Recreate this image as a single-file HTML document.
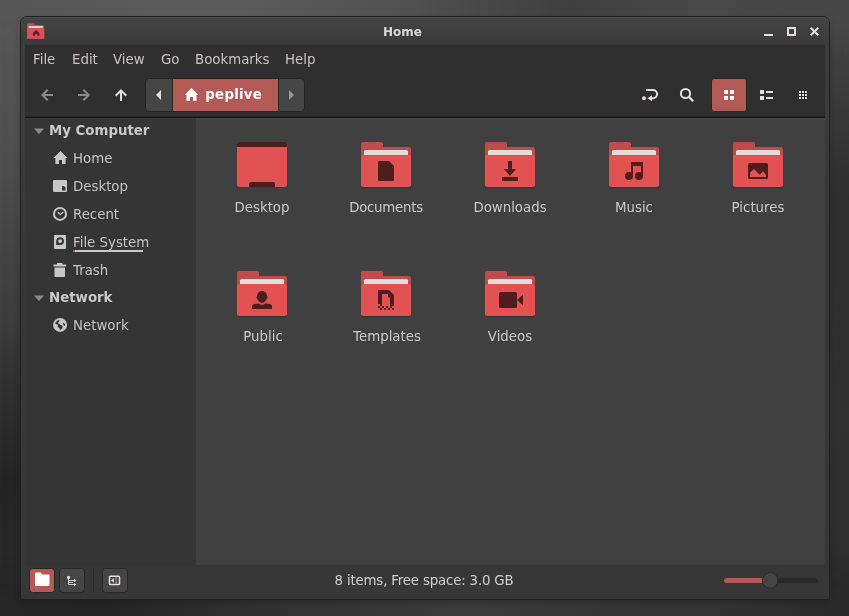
<!DOCTYPE html>
<html lang="en">
<head>
<meta charset="utf-8">
<title>Home</title>
<style>
*{box-sizing:border-box;margin:0;padding:0}
html,body{width:849px;height:616px;overflow:hidden}
body{
  position:relative;
  font-family:"DejaVu Sans","Liberation Sans",sans-serif;
  font-size:13.33px;
  color:#d8d8d8;
  background:#2e2e2e;
}

#bgL,#bgR{position:absolute;left:0;top:0;width:849px;height:616px}
#bgL{background:linear-gradient(to bottom,#565656 0px,#545454 60px,#505050 150px,#454545 240px,#3d3d3d 320px,#2e2e2e 400px,#242424 480px,#282828 560px,#262626 616px)}
#bgR{background:linear-gradient(to bottom,#474747 0px,#414141 46px,#383838 120px,#2f2f2f 200px,#2f2f2f 300px,#323232 420px,#2f2f2f 530px,#292929 616px);-webkit-mask-image:linear-gradient(to right,transparent 0,#000 100%);mask-image:linear-gradient(to right,transparent 0,#000 100%)}
#bgT{position:absolute;left:0;top:0;width:849px;height:60px;background:linear-gradient(to right,#565656 0px,#575757 66px,#5a5a5a 136px,#5c5c5c 221px,#575757 306px,#515151 406px,#484848 486px,#3f3f3f 572px,#444444 636px,#494949 706px,#454545 776px,#474747 849px);-webkit-mask-image:linear-gradient(to bottom,#000 0,#000 16px,transparent 60px);mask-image:linear-gradient(to bottom,#000 0,#000 16px,transparent 60px)}
#bgB{position:absolute;left:0;top:556px;width:849px;height:60px;background:linear-gradient(to right,#262626 0px,#252525 106px,#2e2e2e 226px,#363636 346px,#3c3c3c 466px,#373737 586px,#333333 706px,#2e2e2e 786px,#292929 849px);-webkit-mask-image:linear-gradient(to top,#000 0,#000 16px,transparent 60px);mask-image:linear-gradient(to top,#000 0,#000 16px,transparent 60px)}
.abs{position:absolute}
#win{
  will-change:transform;
  position:absolute;left:20px;top:16px;width:810px;height:584px;
  background:linear-gradient(180deg,#3d3d3d 0,#3c3c3c 100px,#373737 220px,#373737 100%);border:1px solid #212121;border-radius:7px 7px 3px 3px;
  box-shadow:0 3px 6px rgba(0,0,0,.16);
}
#titlebar{position:absolute;left:0;top:0;width:808px;height:28px;border-radius:6px 6px 0 0;
  background:linear-gradient(180deg,#444444 0%,#3a3a3a 100%);box-shadow:inset 0 1px 0 rgba(255,255,255,.035);}
#title{position:absolute;left:27px;top:0;width:709px;height:28px;line-height:30px;text-align:center;font-weight:bold;font-size:12px;color:#d8d8d8}
#client{position:absolute;left:4px;top:28px;width:800px;height:550px;background:#2f2f2f;overflow:hidden}
#menubar{position:absolute;left:0;top:0;width:800px;height:28px}
#menubar span{position:absolute;top:1px;height:28px;line-height:28px;color:#cbc3c3}
#toolbar{position:absolute;left:0;top:28px;width:800px;height:44px}
#sep{position:absolute;z-index:2;left:0;top:72px;width:800px;height:1px;background:#101010;box-shadow:0 1px 0 rgba(255,255,255,.035), 0 -1px 0 rgba(0,0,0,.12)}
#sidebar{position:absolute;z-index:0;left:0;top:73px;width:171px;height:447px;background:#353535}
#main{position:absolute;left:171px;top:73px;width:629px;height:447px;background:#404040}
#status{position:absolute;left:0;top:520px;width:800px;height:30px;background:#373737;border-top:1px solid #353535}
.sh{position:absolute;left:24px;height:28px;line-height:28px;font-weight:bold;color:#c9c9c9}
.si{position:absolute;left:48px;height:28px;line-height:28px;color:#c4c4c4}
.lbl{position:absolute;width:120px;text-align:center;height:20px;line-height:20px;color:#c9c9c9}
.btn{position:absolute;width:25px;height:25px;border:1px solid #282828;border-radius:4px;background:#454545}
.btn.on{background:#b55a58;border-color:#2a2222}
</style>
</head>
<body>
<div id="bgL"></div><div id="bgR"></div><div id="bgT"></div><div id="bgB"></div>
<div id="win">
  <div id="titlebar"></div>
  <div id="title">Home</div>
  <div id="client">
    <div id="menubar">
      <span style="left:8px">File</span>
      <span style="left:47px">Edit</span>
      <span style="left:88px">View</span>
      <span style="left:136px">Go</span>
      <span style="left:170px">Bookmarks</span>
      <span style="left:260px">Help</span>
    </div>
    <div id="toolbar"></div>
    <div id="sep"></div>
    <div id="sidebar">
      <div class="sh" style="top:-1px">My Computer</div>
      <div class="si" style="top:27px">Home</div>
      <div class="si" style="top:55px">Desktop</div>
      <div class="si" style="top:83px">Recent</div>
      <div class="si" style="top:111px">File System</div>
      <div class="si" style="top:139px">Trash</div>
      <div class="sh" style="top:166px">Network</div>
      <div class="si" style="top:194px">Network</div>
    </div>
    <div id="main">
      <div class="lbl" style="left:6px;top:80px">Desktop</div>
      <div class="lbl" style="left:130px;top:80px;letter-spacing:-0.250px">Documents</div>
      <div class="lbl" style="left:254px;top:80px">Downloads</div>
      <div class="lbl" style="left:378px;top:80px">Music</div>
      <div class="lbl" style="left:502px;top:80px">Pictures</div>
      <div class="lbl" style="left:7px;top:209px">Public</div>
      <div class="lbl" style="left:131px;top:209px">Templates</div>
      <div class="lbl" style="left:254px;top:209px">Videos</div>
    </div>
    <div id="status">
      <div class="abs" style="left:-1px;top:0;width:800px;height:29px;line-height:30px;text-align:center;letter-spacing:-0.170px;color:#d0d0d0">8 items, Free space: 3.0 GB</div>
    </div>
  </div>
</div>
<svg class="abs" style="left:0;top:0;will-change:transform" width="849" height="616" viewBox="0 0 849 616"><g transform="translate(230,133)"><rect x="7" y="9" width="50" height="45.600" rx="2" fill="#2c2c2c" opacity=".55"/><rect x="7" y="9" width="50" height="45" rx="2" fill="#e25252"/><path d="M7,14 v-3 a2,2 0 0 1 2,-2 h46 a2,2 0 0 1 2,2 v3 z" fill="#4f1d1d"/><path d="M19,54 v-3 a2,2 0 0 1 2,-2 h22 a2,2 0 0 1 2,2 v3 z" fill="#4f1d1d"/></g><g transform="translate(354,133)"><path d="M7,53 V11 a2,2 0 0 1 2,-2 h18 a2,2 0 0 1 2,2 v3 h26 a2,2 0 0 1 2,2 v37 z" fill="#c14b4b"/><rect x="7" y="23" width="50" height="32.6" rx="2" fill="#2c2c2c" opacity=".55"/><path d="M10,30 V18.5 a1.5,1.5 0 0 1 1.5,-1.500 h41 a1.500,1.500 0 0 1 1.500,1.500 V30 z" fill="#dedede"/><rect x="7" y="22" width="50" height="32" rx="2" fill="#e25252"/><path d="M24,28 h11 l5,5 v14 a1,1 0 0 1 -1,1 h-14 a1,1 0 0 1 -1,-1 v-18 a1,1 0 0 1 1,-1 z" transform="translate(0,0)" fill="#4f1d1d"/></g><g transform="translate(478,133)"><path d="M7,53 V11 a2,2 0 0 1 2,-2 h18 a2,2 0 0 1 2,2 v3 h26 a2,2 0 0 1 2,2 v37 z" fill="#c14b4b"/><rect x="7" y="23" width="50" height="32.6" rx="2" fill="#2c2c2c" opacity=".55"/><path d="M10,30 V18.5 a1.5,1.5 0 0 1 1.5,-1.500 h41 a1.500,1.500 0 0 1 1.500,1.500 V30 z" fill="#dedede"/><rect x="7" y="22" width="50" height="32" rx="2" fill="#e25252"/><path d="M30,28 h4 v8 h4 l-6,7 l-6,-7 h4 z M24,44 h16 v4 h-16 z" fill="#4f1d1d"/></g><g transform="translate(602,133)"><path d="M7,53 V11 a2,2 0 0 1 2,-2 h18 a2,2 0 0 1 2,2 v3 h26 a2,2 0 0 1 2,2 v37 z" fill="#c14b4b"/><rect x="7" y="23" width="50" height="32.6" rx="2" fill="#2c2c2c" opacity=".55"/><path d="M10,30 V18.5 a1.5,1.5 0 0 1 1.5,-1.500 h41 a1.500,1.500 0 0 1 1.500,1.500 V30 z" fill="#dedede"/><rect x="7" y="22" width="50" height="32" rx="2" fill="#e25252"/><path d="M29,29 h12 v14 h-2 v-10 h-8 v10 h-2 z" fill="#4f1d1d"/><circle cx="27" cy="43" r="4" fill="#4f1d1d"/><circle cx="37" cy="43" r="4" fill="#4f1d1d"/></g><g transform="translate(726,133)"><path d="M7,53 V11 a2,2 0 0 1 2,-2 h18 a2,2 0 0 1 2,2 v3 h26 a2,2 0 0 1 2,2 v37 z" fill="#c14b4b"/><rect x="7" y="23" width="50" height="32.6" rx="2" fill="#2c2c2c" opacity=".55"/><path d="M10,30 V18.5 a1.5,1.5 0 0 1 1.5,-1.500 h41 a1.500,1.500 0 0 1 1.500,1.500 V30 z" fill="#dedede"/><rect x="7" y="22" width="50" height="32" rx="2" fill="#e25252"/><path d="M23.500,30 h17 a1.500,1.500 0 0 1 1.500,1.500 v13 a1.500,1.500 0 0 1 -1.500,1.500 h-17 a1.500,1.500 0 0 1 -1.500,-1.500 v-13 a1.500,1.500 0 0 1 1.500,-1.500 z M24,44 h16 v-2 l-2.900,-3.700 l-3.400,3.500 l-5.600,-5.900 l-4.100,3.900 z" fill-rule="evenodd" fill="#4f1d1d"/></g><g transform="translate(230,262)"><path d="M7,53 V11 a2,2 0 0 1 2,-2 h18 a2,2 0 0 1 2,2 v3 h26 a2,2 0 0 1 2,2 v37 z" fill="#c14b4b"/><rect x="7" y="23" width="50" height="32.6" rx="2" fill="#2c2c2c" opacity=".55"/><path d="M10,30 V18.5 a1.5,1.5 0 0 1 1.5,-1.500 h41 a1.500,1.500 0 0 1 1.500,1.500 V30 z" fill="#dedede"/><rect x="7" y="22" width="50" height="32" rx="2" fill="#e25252"/><path d="M27,34 a5,5 0 0 1 10,0 c0,1 0,2.500 -0.700,3.800 c-1,2 -2.800,3.100 -4.300,3.100 c-1.500,0 -3.300,-1.100 -4.300,-3.100 c-0.700,-1.300 -0.700,-2.800 -0.700,-3.800 z" fill="#4f1d1d"/><ellipse cx="32" cy="35.200" rx="6" ry="1.500" fill="#4f1d1d"/><path d="M22,47 v-3.200 c0,-1.300 3,-2.100 6.500,-2.300 q3.500,2.600 7,0 c3.500,0.200 6.500,1 6.500,2.300 v3.200 z" fill="#4f1d1d"/></g><g transform="translate(354,262)"><path d="M7,53 V11 a2,2 0 0 1 2,-2 h18 a2,2 0 0 1 2,2 v3 h26 a2,2 0 0 1 2,2 v37 z" fill="#c14b4b"/><rect x="7" y="23" width="50" height="32.6" rx="2" fill="#2c2c2c" opacity=".55"/><path d="M10,30 V18.5 a1.5,1.5 0 0 1 1.5,-1.500 h41 a1.500,1.500 0 0 1 1.500,1.500 V30 z" fill="#dedede"/><rect x="7" y="22" width="50" height="32" rx="2" fill="#e25252"/><path d="M24,28 h11 l5,5 v11 h-4 v-8.500 h-2 v-3.500 h-6 v12 h-2 v-2 h-2 z" fill="#4f1d1d"/><rect x="24" y="44" width="2" height="2" fill="#4f1d1d"/><rect x="28" y="44" width="2" height="2" fill="#4f1d1d"/><rect x="32" y="44" width="2" height="2" fill="#4f1d1d"/><rect x="36" y="44" width="2" height="2" fill="#4f1d1d"/><rect x="26" y="46" width="2" height="2" fill="#4f1d1d"/><rect x="30" y="46" width="2" height="2" fill="#4f1d1d"/><rect x="34" y="46" width="2" height="2" fill="#4f1d1d"/><rect x="38" y="46" width="2" height="2" fill="#4f1d1d"/></g><g transform="translate(478,262)"><path d="M7,53 V11 a2,2 0 0 1 2,-2 h18 a2,2 0 0 1 2,2 v3 h26 a2,2 0 0 1 2,2 v37 z" fill="#c14b4b"/><rect x="7" y="23" width="50" height="32.6" rx="2" fill="#2c2c2c" opacity=".55"/><path d="M10,30 V18.5 a1.5,1.5 0 0 1 1.5,-1.500 h41 a1.500,1.500 0 0 1 1.500,1.500 V30 z" fill="#dedede"/><rect x="7" y="22" width="50" height="32" rx="2" fill="#e25252"/><rect x="21" y="30" width="18" height="16" rx="1.500" fill="#4f1d1d"/><path d="M39.300,38 l5.700,-5.800 v11.600 z" fill="#4f1d1d"/></g><g transform="translate(27,23)"><path d="M0,15.800 V1.300 a1,1 0 0 1 1,-1 h5.500 a1,1 0 0 1 1,1 v0.700 h8.700 a1,1 0 0 1 1,1 V15.800 z" fill="#c14b4b"/><rect x="1.500" y="3" width="14.200" height="2.500" fill="#dcd2d2"/><rect x="0" y="5" width="17.200" height="10.800" rx="1" fill="#d65355"/><path d="M9.100,6.900 l3.300,3.100 v2.800 h-2.300 v-1.900 h-2 v1.900 h-2.300 v-2.800 z" fill="#5e2023"/></g><rect x="764" y="34" width="9" height="2" fill="#e4dede"/><rect x="788" y="28" width="7" height="7" fill="none" stroke="#e4dede" stroke-width="2"/><path d="M810.700,27.700 l7.600,7.600 M818.300,27.700 l-7.600,7.600" stroke="#e4dede" stroke-width="2" fill="none"/><path d="M53,95 H43 M47.700,89.700 L42.400,95 L47.700,100.300" stroke="#8c8888" stroke-width="2" fill="none"/><path d="M78,95 H88 M83.300,89.700 L88.600,95 L83.300,100.300" stroke="#8c8888" stroke-width="2" fill="none"/><path d="M121,101 V91 M115.700,95.700 L121,90.400 L126.300,95.700" stroke="#e4dede" stroke-width="2" fill="none"/><rect x="145.500" y="78.500" width="159" height="33" rx="3.500" fill="#454545" stroke="#242424"/><rect x="173" y="79" width="105" height="32" fill="#b35a56"/><path d="M172.500,79 v32 M278.500,79 v32" stroke="#2e2626" stroke-width="1"/><text x="205.300" y="99.200" letter-spacing="0.250" font-family="DejaVu Sans, Liberation Sans, sans-serif" font-weight="bold" font-size="13.330" fill="#ffffff">peplive</text><path d="M156,95 l5,-5 v10 z" fill="#e4dede"/><path d="M294,95 l-5,-5 v10 z" fill="#9a9696"/><path d="M191.500,88 l6.800,6.800 h-1.800 v6.200 h-3.500 v-4 h-3 v4 h-3.500 v-6.200 h-1.800 z" fill="#ffffff"/><circle cx="644" cy="98.200" r="2" fill="#e4dede"/><path d="M646,90 H653 a4.100,4.100 0 0 1 0,8.200 H651" stroke="#e4dede" stroke-width="2" fill="none"/><path d="M647.500,98.200 l4.500,-3 v6 z" fill="#e4dede"/><circle cx="685.500" cy="93.500" r="4.600" stroke="#e4dede" stroke-width="2" fill="none"/><path d="M688.800,96.800 L693.200,101.200" stroke="#e4dede" stroke-width="2.300" fill="none"/><rect x="711.500" y="78.500" width="35" height="33" rx="2.500" fill="#b35a56" stroke="#252828"/><rect x="724" y="90" width="4" height="4" fill="#ffffff"/><rect x="724" y="96" width="4" height="4" fill="#ffffff"/><rect x="730" y="90" width="4" height="4" fill="#ffffff"/><rect x="730" y="96" width="4" height="4" fill="#ffffff"/><rect x="760" y="90" width="4" height="4" fill="#e4dede"/><rect x="766" y="91" width="7" height="2" fill="#e4dede"/><rect x="760" y="96" width="4" height="4" fill="#e4dede"/><rect x="766" y="97" width="7" height="2" fill="#e4dede"/><rect x="799" y="91" width="2" height="2" fill="#e4dede"/><rect x="799" y="94" width="2" height="2" fill="#e4dede"/><rect x="799" y="97" width="2" height="2" fill="#e4dede"/><rect x="802" y="91" width="2" height="2" fill="#e4dede"/><rect x="802" y="94" width="2" height="2" fill="#e4dede"/><rect x="802" y="97" width="2" height="2" fill="#e4dede"/><rect x="805" y="91" width="2" height="2" fill="#e4dede"/><rect x="805" y="94" width="2" height="2" fill="#e4dede"/><rect x="805" y="97" width="2" height="2" fill="#e4dede"/><path d="M34,128.500 h10 l-5,5.800 z" fill="#8a8a8a"/><path d="M34,295.500 h10 l-5,5.800 z" fill="#8a8a8a"/><path d="M60.500,151 l7,7 h-1.900 v6 h-3.600 v-4 h-3 v4 h-3.600 v-6 h-1.900 z" fill="#c8c8c8"/><path d="M53,181 a1,1 0 0 1 1,-1 h12 a1,1 0 0 1 1,1 v10 a1,1 0 0 1 -1,1 h-12 a1,1 0 0 1 -1,-1 z M62,186 v4.500 h3.500 v-3 l-1.500,-1.500 z" fill-rule="evenodd" fill="#c8c8c8"/><circle cx="60" cy="213.900" r="6" stroke="#c8c8c8" stroke-width="2" fill="none"/><path d="M57.700,212.300 l2.600,2.200 l3,-2.600" stroke="#c8c8c8" stroke-width="1.300" fill="none"/><path d="M54,236 a1,1 0 0 1 1,-1 h10 a1,1 0 0 1 1,1 v12 a1,1 0 0 1 -1,1 h-10 a1,1 0 0 1 -1,-1 z M56.200,241.100 a3.900,3.900 0 0 1 7.800,0 a3.900,3.900 0 0 1 -3.900,3.900 h-3.900 z" fill-rule="evenodd" fill="#c8c8c8"/><circle cx="60.100" cy="241.100" r="1.950" fill="#c8c8c8"/><rect x="73" y="250" width="70" height="2" fill="#c8c8c8"/><rect x="73" y="250" width="2" height="2" fill="#d24a4a"/><path d="M57,263 h5.500 v1.500 h3.500 v2 h-12.500 v-2 h3.500 z M54.500,267.500 h10.500 v8.500 a1,1 0 0 1 -1,1 h-8.500 a1,1 0 0 1 -1,-1 z" fill="#c8c8c8"/><circle cx="60.050" cy="324.900" r="7" fill="#c8c8c8"/><path d="M58.700,320 l1,0.400 l-0.800,1.700 l-1.100,0.500 l0.600,0.900 l2,1.300 l1.200,0.500 l0.900,1.200 l-0.200,1.800 l-1.600,1.500 l-0.900,-0.300 l-0.300,-1.300 l-1.400,-0.900 l-0.700,-0.900 l0.900,-0.300 l-0.700,-1.300 l-1.700,-1 l-0.600,0.100 l0.300,-1.600 l1.500,-1.400 z M63,323 l1,-0.300 l0.900,1.500 l0,1.600 l-0.800,0.300 l-0.900,-1.500 z" fill="#353535"/><rect x="29.500" y="568.500" width="25" height="24" rx="3" fill="#b35a56" stroke="#222626"/><path d="M35,573.500 a1,1 0 0 1 1,-1 h4.500 l2,2 h6 a1,1 0 0 1 1,1 v9.500 a1,1 0 0 1 -1,1 h-12.500 a1,1 0 0 1 -1,-1 z" fill="#ffffff"/><rect x="59.500" y="568.500" width="25" height="24" rx="3" fill="#454545" stroke="#282828"/><circle cx="68.500" cy="577.400" r="1.600" fill="#e4dede"/><path d="M68.500,578 v6.500 h6 M68.500,580.500 h6 M69,582.500 h4" stroke="#e4dede" stroke-width="1" fill="none" opacity=".9"/><path d="M74,579 l2.500,1.500 l-2.500,1.500 z M74,583 l2.500,1.500 l-2.500,1.500 z" fill="#e4dede"/><rect x="93" y="568" width="1" height="25" fill="#2e2e2e"/><rect x="102.500" y="568.500" width="25" height="24" rx="3" fill="#454545" stroke="#282828"/><rect x="109.500" y="576.200" width="10" height="8.400" rx="0.800" fill="none" stroke="#e4dede" stroke-width="1.500"/><path d="M111,580.400 l2.800,-2.400 v4.800 z" fill="#e4dede"/><rect x="115" y="577" width="2" height="7" fill="#e4dede" opacity=".3"/><rect x="724" y="578" width="94" height="5" rx="2.500" fill="#2a2a2a"/><rect x="724" y="578" width="44" height="5" rx="2.500" fill="#b35a56"/><circle cx="770.200" cy="580.400" r="7.900" fill="#454545" stroke="#262626"/></svg>
</body>
</html>
